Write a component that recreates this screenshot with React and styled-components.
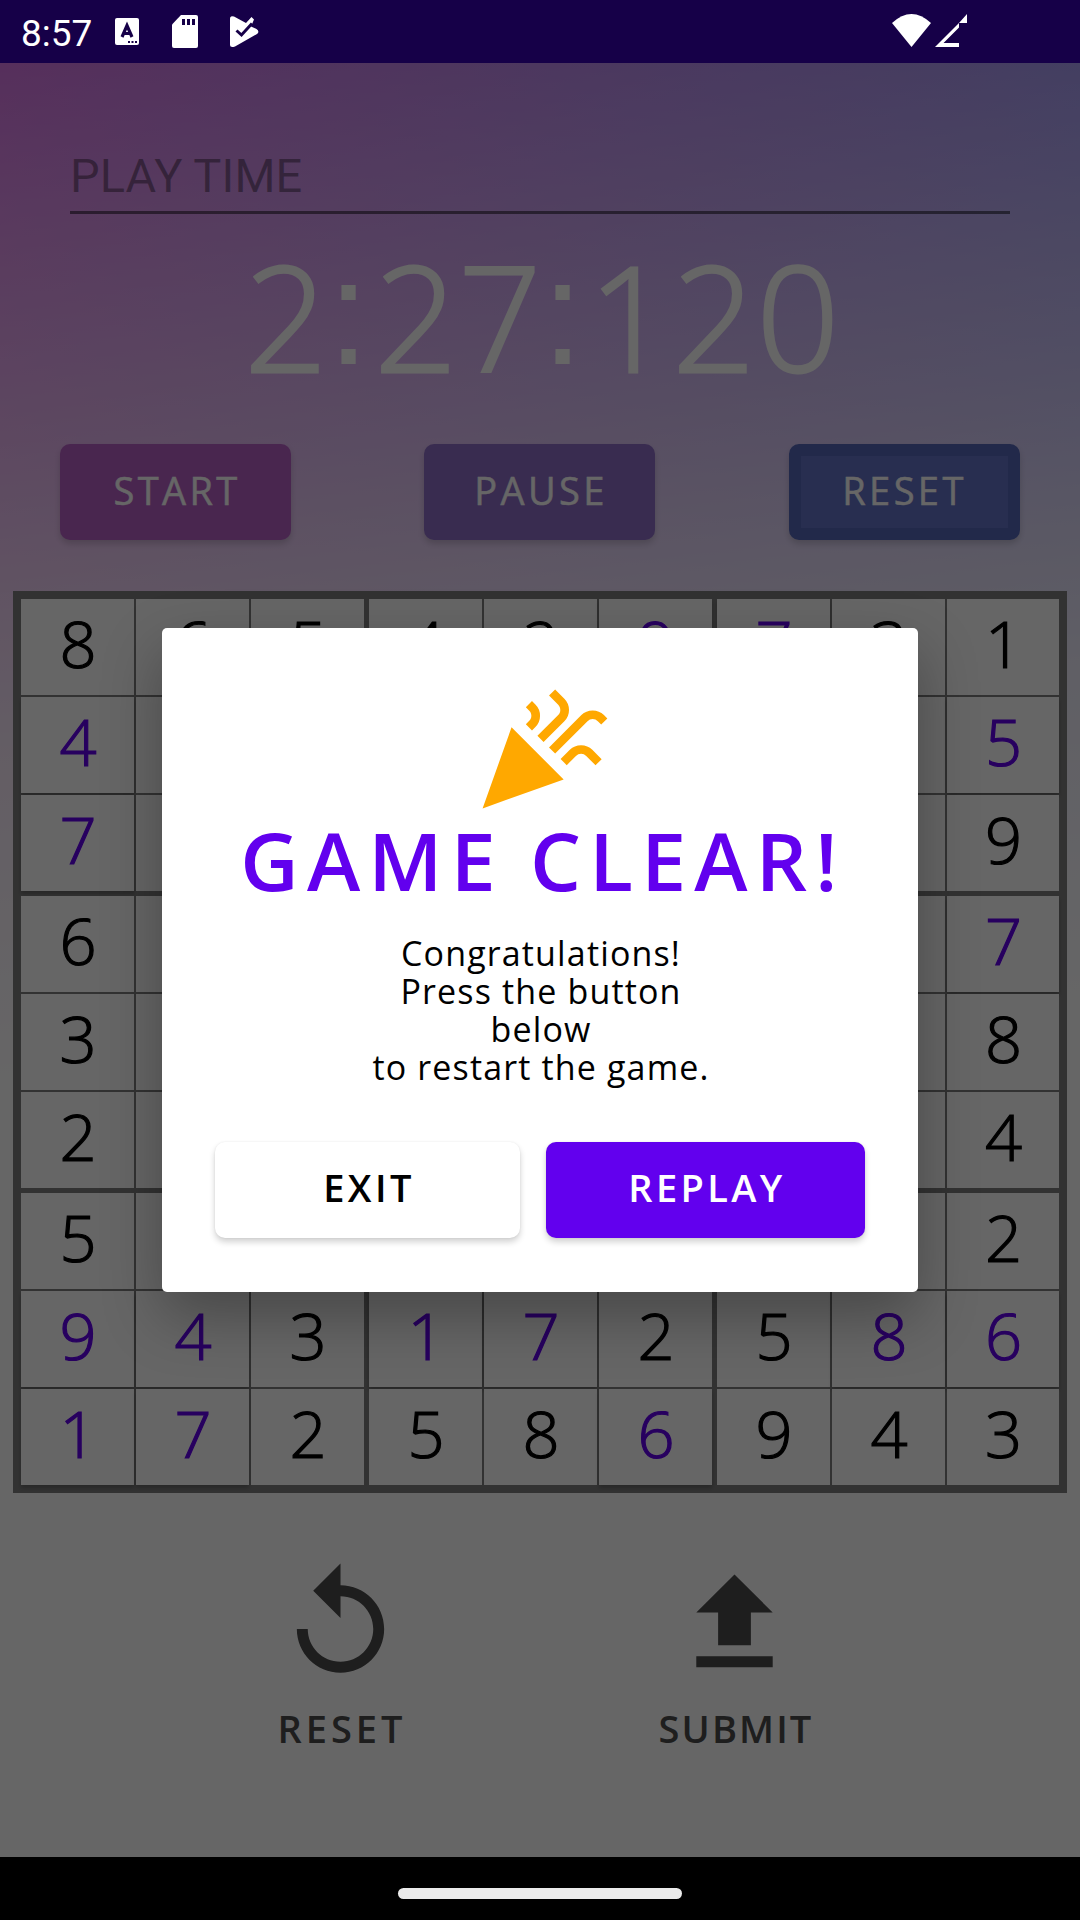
import React from 'react';
import styled, { createGlobalStyle } from 'styled-components';
import { MdCelebration, MdReplay, MdUpload } from 'react-icons/md';

const GlobalStyle = createGlobalStyle`
  * { box-sizing: border-box; }
  body { margin: 0; background: #000; }
`;

const Phone = styled.div`
  position: relative;
  width: 1080px;
  height: 1920px;
  display: flex;
  flex-direction: column;
  overflow: hidden;
  font-family: 'Open Sans', 'Noto Sans', sans-serif;
`;

const StatusBar = styled.header`
  position: relative;
  z-index: 2;
  height: 63px;
  flex: none;
  display: flex;
  align-items: flex-start;
  justify-content: space-between;
  background: #160048;
  color: #fff;
`;

const StatusLeft = styled.div`
  display: flex;
  align-items: flex-start;
  padding-left: 21px;
`;

const Clock = styled.span`
  width: 94px;
  font: 400 37px/42px Roboto, sans-serif;
  padding-top: 13px;
  white-space: nowrap;
`;

const StatusRight = styled.div`
  display: flex;
  gap: 4px;
  padding: 14px 113px 0 0;
`;

const StatusIcon = styled.svg`
  display: block;
  margin-top: ${(p) => p.$top || 0}px;
  margin-right: ${(p) => p.$after || 0}px;
`;

const Screen = styled.main`
  flex: 1;
  display: flex;
  flex-direction: column;
  background:
    linear-gradient(
      176deg,
      rgba(255, 255, 255, 0) 0,
      rgba(255, 255, 255, 0.46) 380px,
      rgba(255, 255, 255, 0.69) 550px,
      rgba(255, 255, 255, 0.83) 670px,
      rgba(255, 255, 255, 0.96) 920px,
      #fff 1030px
    ),
    linear-gradient(to right, #d776e6, #a093f2);
`;

const Heading = styled.div`
  height: 151px;
  margin: 0 70px;
  padding-top: 83px;
  border-bottom: 3px solid rgba(0, 0, 0, 0.5);
  font: 400 47px/60px Roboto, sans-serif;
  letter-spacing: 0.1px;
  color: rgba(0, 0, 0, 0.38);
`;

const Timer = styled.div`
  height: 230px;
  display: flex;
  justify-content: center;
  padding: 2px 0 0 4px;
  font-size: 145px;
  line-height: 200px;
  font-weight: 300;
  color: #fff;
  -webkit-text-stroke: 2.8px #fff;
`;

const TimerDigit = styled.span`
  width: 84px;
  text-align: center;
`;

const TimerColon = styled.span`
  width: 46px;
  margin-top: -3px;
  padding-right: 6px;
  text-align: center;
  font-family: 'Liberation Sans', Arial, sans-serif;
  font-size: 148px;
  -webkit-text-stroke: 0;
`;

const Controls = styled.div`
  display: flex;
  gap: 133px;
  padding: 0 60px;
  height: 147px;
`;

const ControlButton = styled.button`
  width: 231px;
  height: 96px;
  border: ${(p) => (p.$edge ? `12px solid ${p.$edge}` : '0')};
  border-radius: 10px;
  background: ${(p) => p.$color};
  box-shadow: 0 4px 6px rgba(0, 0, 0, 0.16);
  color: #fff;
  font: 400 38px/40px 'Open Sans', sans-serif;
  letter-spacing: 3.4px;
  padding: 0 0 5px ${(p) => (p.$edge ? 0 : 3)}px;
  -webkit-text-stroke: 0.5px #fff;
  &:last-child { margin-left: auto; }
`;

const Board = styled.section`
  width: 1054px;
  height: 902px;
  flex: none;
  margin-left: 13px;
  display: grid;
  grid-template-columns: repeat(2, 343px) 342px;
  grid-template-rows: repeat(3, 292px);
  gap: 5px;
  padding: 8px;
  background: #7e7e7e;
`;

const Block = styled.div`
  display: grid;
  grid-template-columns: 113px 113px 1fr;
  grid-template-rows: repeat(3, 96px);
  gap: 2px;
`;

const Cell = styled.div`
  display: flex;
  align-items: center;
  justify-content: center;
  background: #fff;
  color: ${(p) => (p.$entered ? '#6200ee' : '#000')};
  box-shadow: ${(p) => (p.$entered ? '0 3px 4px rgba(0, 0, 0, 0.22)' : 'none')};
  font-size: 65px;
  font-weight: 300;
  line-height: 80px;
  padding: 0 0 8px 1px;
  -webkit-text-stroke: 1.2px currentColor;
`;

const Actions = styled.div`
  display: flex;
  padding: 65px 0 0 240px;
  gap: 194px;
`;

const Action = styled.div`
  width: 200px;
  display: flex;
  flex-direction: column;
  align-items: center;
  color: #4b4b4b;
`;

const ActionLabel = styled.span`
  padding: 14px 0 0 4px;
  font-size: 38px;
  line-height: 50px;
  font-weight: 600;
  letter-spacing: ${(p) => p.$tracking}px;
`;

const NavBar = styled.footer`
  position: relative;
  z-index: 2;
  height: 63px;
  flex: none;
  display: flex;
  justify-content: center;
  padding-top: 31px;
  background: #000;
`;

const Handle = styled.div`
  width: 284px;
  height: 11px;
  border-radius: 6px;
  background: #ebebeb;
`;

const Scrim = styled.div`
  position: absolute;
  inset: 0;
  z-index: 1;
  display: flex;
  align-items: center;
  justify-content: center;
  background: rgba(0, 0, 0, 0.6);
`;

const Dialog = styled.div`
  width: 756px;
  height: 664px;
  display: flex;
  flex-direction: column;
  align-items: center;
  padding: 53px 53px 0;
  border-radius: 5px;
  background: #fff;
  box-shadow: 0 24px 60px rgba(0, 0, 0, 0.3);
`;

const Title = styled.h1`
  margin: -5px 0 0;
  padding-left: 6px;
  font-size: 80.5px;
  line-height: 90px;
  font-weight: 600;
  letter-spacing: 8.2px;
  word-spacing: -3px;
  color: #6200ee;
  white-space: nowrap;
`;

const Message = styled.p`
  margin: 29px 0 0;
  padding-left: 2px;
  font-size: 34px;
  line-height: 38px;
  letter-spacing: 1.15px;
  text-align: center;
  color: #000;
  white-space: pre-line;
`;

const DialogButtons = styled.div`
  width: 100%;
  margin-top: 56px;
  display: grid;
  grid-template-columns: 305px 319px;
  gap: 26px;
`;

const DialogButton = styled.button`
  height: 96px;
  border: 0;
  border-radius: 10px;
  background: ${(p) => (p.$primary ? '#6200ee' : '#fff')};
  color: ${(p) => (p.$primary ? '#fff' : '#000')};
  box-shadow: 0 4px 6px rgba(0, 0, 0, 0.18), 0 0 2px rgba(0, 0, 0, 0.08);
  font: 600 38px/40px 'Open Sans', sans-serif;
  letter-spacing: 3.4px;
  padding: 0 0 6px 3px;
`;

/* Each inner list is one 3×3 block, read row by row; a star marks a digit entered by the player. */
const boardBlocks = [
  ['8', '6', '5', '4*', '', '', '7*', '', ''],
  ['4', '2', '9*', '', '', '', '', '', ''],
  ['7*', '3', '1', '', '', '5*', '', '', '9'],
  ['6', '', '', '3', '', '', '2', '', ''],
  ['', '', '', '', '', '', '', '', ''],
  ['', '', '7*', '', '', '8', '', '', '4'],
  ['5', '', '', '9*', '4*', '3', '1*', '7*', '2'],
  ['', '', '', '1*', '7*', '2', '5', '8', '6*'],
  ['', '', '2', '5', '8*', '6*', '9', '4', '3'],
];

const controls = [
  { label: 'START', color: '#b75fc6' },
  { label: 'PAUSE', color: '#8f6ec8' },
  { label: 'RESET', color: '#6473c8', edge: '#5567b9' },
];

export default function App() {
  return (
    <Phone>
      <GlobalStyle />
      <StatusBar>
        <StatusLeft>
          <Clock>8:57</Clock>
          <StatusIcon width="24" height="27" viewBox="0 0 24 27" $top={18} $after={33}>
            <rect width="24" height="27" rx="2" fill="#fff" />
            <path d="M7 19 L12 7.5 L17 19 M9 15.5 H15" fill="none" stroke="#160048" strokeWidth="3.2" />
            <path d="M13 23h2v2h-2zM16.500 23h2v2h-2zM20 23h2v2h-2z" fill="#160048" />
          </StatusIcon>
          <StatusIcon width="26" height="33" viewBox="0 0 26 33" $top={15} $after={32}>
            <path d="M9 0H24a2 2 0 0 1 2 2V31a2 2 0 0 1-2 2H2a2 2 0 0 1-2-2V9.500Z" fill="#fff" />
            <path d="M10 4h3v6h-3zM15 4h3v6h-3zM20 4h3v6h-3z" fill="#160048" />
          </StatusIcon>
          <StatusIcon width="29" height="32" viewBox="0 0 29 32" $top={16}>
            <path d="M0 3Q0-1 4 .6L16 7L21.500 1L24 3.500L21 10.500L26.500 13Q30 15.500 27 18L5 30.500Q0 32 0 29Z" fill="#fff" />
            <path d="M6.500 14.500L11.500 19L22 7.500" fill="none" stroke="#160048" strokeWidth="3" />
          </StatusIcon>
        </StatusLeft>
        <StatusRight>
          <StatusIcon width="39" height="33" viewBox="0 0 39 33">
            <path d="M0 9Q19.500-9 39 9L19.500 33Z" fill="#fff" />
          </StatusIcon>
          <StatusIcon width="32" height="33" viewBox="0 0 32 33">
            <path d="M32 0V9H24ZM24 9V13.500L8.500 29H24V33H0Z" fill="#fff" />
          </StatusIcon>
        </StatusRight>
      </StatusBar>

      <Screen>
        <Heading>PLAY TIME</Heading>
        <Timer>
          {'2:27:120'.split('').map((ch, i) =>
            ch === ':' ? <TimerColon key={i}>:</TimerColon> : <TimerDigit key={i}>{ch}</TimerDigit>
          )}
        </Timer>
        <Controls>
          {controls.map((c) => (
            <ControlButton key={c.label} $color={c.color} $edge={c.edge}>{c.label}</ControlButton>
          ))}
        </Controls>
        <Board>
          {boardBlocks.map((cells, b) => (
            <Block key={b}>
              {cells.map((v, i) => (
                <Cell key={i} $entered={v.endsWith('*')}>{v.replace('*', '')}</Cell>
              ))}
            </Block>
          ))}
        </Board>
        <Actions>
          <Action>
            <MdReplay size={131} />
            <ActionLabel $tracking={4}>RESET</ActionLabel>
          </Action>
          <Action>
            <MdUpload size={131} />
            <ActionLabel $tracking={2.1}>SUBMIT</ActionLabel>
          </Action>
        </Actions>
      </Screen>

      <NavBar>
        <Handle />
      </NavBar>

      <Scrim>
        <Dialog>
          <MdCelebration size={139} color="#ffa800" />
          <Title>GAME CLEAR!</Title>
          <Message>{'Congratulations!\nPress the button\nbelow\nto restart the game.'}</Message>
          <DialogButtons>
            <DialogButton>EXIT</DialogButton>
            <DialogButton $primary>REPLAY</DialogButton>
          </DialogButtons>
        </Dialog>
      </Scrim>
    </Phone>
  );
}
